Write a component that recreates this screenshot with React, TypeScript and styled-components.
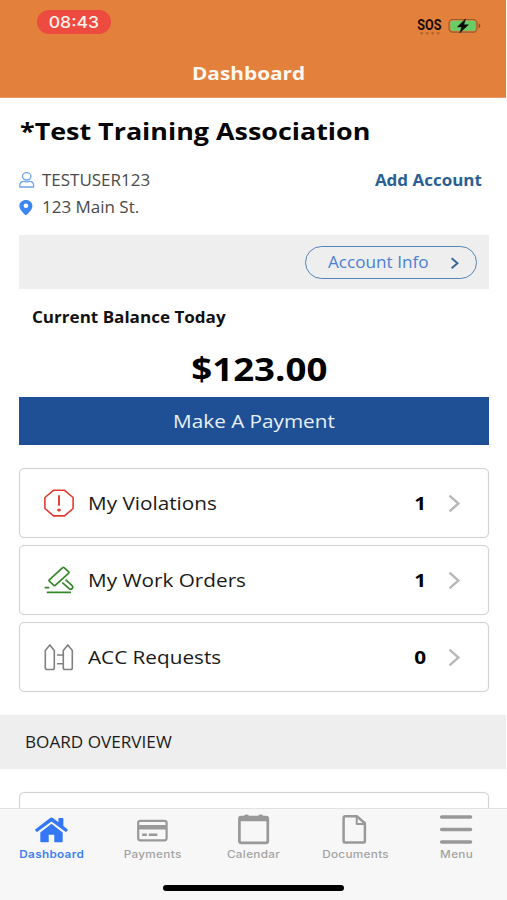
import React from "react";
import styled, { createGlobalStyle } from "styled-components";

const GlobalStyle = createGlobalStyle`
  *, *::before, *::after { box-sizing: border-box; }
  body { margin: 0; background: #fff; }
  button { padding: 0; border: 0; background: none; font: inherit; color: inherit; }
  svg { display: block; flex: none; }
`;

const SANS = '"Open Sans", "Noto Sans", sans-serif';
const SYSTEM = 'Inter, Roboto, sans-serif';

/* Wide text: glyphs are stretched horizontally from the given origin. */
const Text = styled.span<{
  $size: number;
  $weight?: number;
  $color?: string;
  $stretch?: number;
  $origin?: "left" | "center" | "right";
}>`
  display: block;
  font-family: ${SANS};
  font-size: ${(p) => p.$size}px;
  font-weight: ${(p) => p.$weight ?? 400};
  color: ${(p) => p.$color ?? "#111"};
  line-height: 1.362;
  white-space: nowrap;
  transform: scaleX(${(p) => p.$stretch ?? 1.12});
  transform-origin: ${(p) => p.$origin ?? "left"} center;
`;

const SystemText = styled(Text)<{ $spacing?: number }>`
  font-family: ${SYSTEM};
  line-height: 1.2;
  letter-spacing: ${(p) => p.$spacing ?? 0}px;
`;

const SosText = styled(Text)`
  font-family: Roboto, sans-serif;
  line-height: 14px;
`;

const Screen = styled.div`
  display: flex;
  flex-direction: column;
  width: 507px;
  height: 900px;
  overflow: hidden;
  background: #fff;
`;

const Header = styled.header`
  flex: none;
  width: 506px;
  height: 98px;
  background: #e3803c;
  border-bottom: 1px solid #e79a65;
`;

const StatusBar = styled.div`
  display: flex;
  justify-content: space-between;
  align-items: flex-start;
  height: 49px;
  padding: 10px 25px 0 37px;
`;

const TimePill = styled.div`
  display: flex;
  align-items: center;
  justify-content: center;
  width: 74px;
  height: 24px;
  padding-top: 1px;
  border-radius: 12px;
  background: #ee4b40;
`;

const StatusRight = styled.div`
  display: flex;
  align-items: flex-start;
  gap: 5px;
  padding-top: 8px;
`;

const Sos = styled.div`
  display: flex;
  flex-direction: column;
  align-items: center;
`;

const NavTitle = styled.div`
  display: flex;
  justify-content: center;
  align-items: center;
  height: 48px;
  padding-right: 8px;
`;

const Body = styled.main`
  display: flex;
  flex-direction: column;
  flex: 1;
  min-height: 0;
  overflow: hidden;
`;

const Section = styled.section`
  display: flex;
  flex-direction: column;
  flex: none;
  padding: 0 18px 0 19px;
`;

const TitleRow = styled.div`
  display: flex;
  align-items: center;
  height: 66px;
  padding-left: 0.5px;
`;

const InfoList = styled.div`
  display: flex;
  flex-direction: column;
  padding-top: 3px;
`;

const InfoRow = styled.div`
  display: flex;
  align-items: center;
  height: 27px;
`;

const IconSlot = styled.div`
  width: 23px;
  flex: none;
`;

const PushRight = styled.div`
  margin-left: auto;
  padding-right: 7px;
`;

const InfoStrip = styled.div`
  display: flex;
  align-items: center;
  justify-content: flex-end;
  height: 54px;
  width: 470px;
  margin-top: 14px;
  padding-right: 12px;
  background: #eee;
`;

const AccountButton = styled.button`
  display: flex;
  align-items: center;
  justify-content: space-between;
  width: 172px;
  height: 33px;
  padding: 2px 17px 0 22px;
  border: 1.5px solid #5586b5;
  border-radius: 17px;
`;

const BalanceLabel = styled.div`
  display: flex;
  align-items: center;
  height: 58px;
  padding-left: 12.5px;
`;

const Amount = styled.div`
  display: flex;
  align-items: center;
  justify-content: center;
  height: 45px;
  padding-left: 11px;
  width: 470px;
`;

const PayButton = styled.button`
  display: flex;
  align-items: center;
  justify-content: center;
  width: 470px;
  height: 48px;
  margin-top: 5px;
  background: #1f5096;
`;

const CardList = styled.div`
  display: flex;
  flex-direction: column;
  gap: 7px;
  width: 470px;
  margin-top: 23px;
`;

const Card = styled.div`
  display: flex;
  align-items: center;
  height: 70px;
  padding: 0 27px 0 24px;
  border: 1px solid #d4d4d4;
  border-radius: 5px;
  box-shadow: 0 0 1px #d8d8d8, inset 0 0 1px #d8d8d8;
`;

const CardLabel = styled.div`
  flex: 1;
  padding-left: 13.5px;
`;

const CardCount = styled.div`
  display: flex;
  justify-content: center;
  width: 14px;
  margin-right: 21px;
`;

const SectionHeading = styled.div`
  display: flex;
  align-items: center;
  flex: none;
  width: 506px;
  height: 54px;
  margin-top: 23px;
  padding: 2px 0 0 25px;
  background: #eee;
`;

const EmptyCard = styled(Card)`
  width: 470px;
  margin-top: 23px;
`;

const TabBar = styled.nav`
  display: flex;
  flex-direction: column;
  flex: none;
  height: 92px;
  background: #f7f7f7;
  border-top: 1px solid #e2e2e2;
`;

const Tabs = styled.div`
  display: grid;
  grid-template-columns: repeat(5, 1fr);
  height: 53px;
`;

const Tab = styled.div`
  display: flex;
  flex-direction: column;
  align-items: center;
  padding-top: 5px;
  gap: 4px;
`;

const TabLabel = styled.div`
  padding-left: 1px;
`;

const HomeIndicator = styled.div`
  width: 181px;
  height: 6px;
  margin: 23px auto 0;
  border-radius: 3px;
  background: #000;
`;

const BatteryIcon = () => (
  <svg width="33" height="18" viewBox="0 0 33 18">
    <rect x="1" y="1.5" width="28" height="12.600" rx="3.6" fill="#e3803c" stroke="#9a5b2d" strokeWidth="1.2" />
    <rect x="2.4" y="2.8" width="25.200" height="10" rx="2" fill="#69cc67" />
    <path d="M30.600 5.200c2.300 1 2.300 4.200 0 5.200z" fill="#8a5128" />
    <path d="M17.500 1 9.400 8.900h4.400L11.900 14.800l8.500-8h-4.600z" fill="#0b0b05" stroke="#0b0b05" strokeWidth=".5" />
  </svg>
);

const SosDots = () => (
  <svg width="24" height="4" viewBox="0 0 24 4" fill="#b4672f">
    {[3.7, 9.2, 14.7, 20.2].map((x) => (
      <circle key={x} cx={x} cy="1.200" r="1.400" />
    ))}
  </svg>
);

const UserIcon = () => (
  <svg width="16" height="17" viewBox="0 0 16 17" fill="none" stroke="#6fa4ee" strokeWidth="1.300">
    <ellipse cx="7.700" cy="4.300" rx="4.200" ry="3.700" />
    <path d="M.8 15v-1.400c0-2.700 1.700-4.200 4-4.200.8 0 1.400.5 2.900.5s2.100-.5 2.900-.5c2.300 0 4 1.500 4 4.200V15z" strokeLinejoin="round" />
  </svg>
);

const PinIcon = () => (
  <svg width="14" height="16" viewBox="0 0 14 16">
    <path
      d="M6.900.1C3.200.1.4 2.700.4 5.900c0 3.500 3.300 6.300 5.700 8.900.5.5 1.100.5 1.600 0 2.400-2.600 5.700-5.400 5.700-8.900C13.400 2.700 10.600.1 6.900.1zm0 3.500a2.300 2.200 0 1 1 0 4.400 2.300 2.200 0 0 1 0-4.400z"
      fill="#3d86ef"
      fillRule="evenodd"
    />
  </svg>
);

const ChevronIcon = ({ small = false }: { small?: boolean }) =>
  small ? (
    <svg width="8" height="14" viewBox="0 0 8 14" fill="none" stroke="#356596" strokeWidth="1.900">
      <path d="M.6 2.200 6.500 7.200 .6 12.200" />
    </svg>
  ) : (
    <svg width="13" height="19" viewBox="0 0 13 19" fill="none" stroke="#b8b8b8" strokeWidth="2.400">
      <path d="M1.500 1.600 10.400 9.500 1.500 17.400" />
    </svg>
  );

const ViolationIcon = () => (
  <svg width="30" height="28" viewBox="0 0 30 28" fill="none" stroke="#e23c30" strokeWidth="1.600">
    <path d="M9.500 1.300h11l8.600 7.200v11L20.500 26.900h-11L.9 19.500v-11z" />
    <path d="M15 6.200v10.600" strokeWidth="1.900" />
    <ellipse cx="15" cy="21" rx="1.900" ry="1.500" fill="#e23c30" stroke="none" />
  </svg>
);

const GavelIcon = () => (
  <svg width="30" height="28" viewBox="0 0 30 28" fill="none" stroke="#36872a" strokeWidth="1.700" strokeLinejoin="round">
    <path d="M18.700 1.600Q19.300 1 20 1.600l4.700 4.300q.6.600 0 1.200L11.200 19.300q-.7.600-1.300 0l-4.600-4.200q-.6-.6 0-1.200z" />
    <path d="m18.300 16.600 6.900 6.100c2 1.400 4.600-.8 3.100-2.800l-6.700-6.200" />
    <path d="M.7 21.600h4.600M2.800 26.400H27" />
  </svg>
);

const FenceIcon = () => (
  <svg width="30" height="28" viewBox="0 0 30 28" fill="none" stroke="#808080" strokeWidth="1.600" strokeLinejoin="round">
    <path d="M1.300 7.500 5.800 1.900 10.300 7.500v17.200q0 1.800-1.600 1.800H2.900q-1.600 0-1.600-1.800z" />
    <path d="M19.300 7.500l4.500-5.600L28.300 7.500v17.200q0 1.800-1.600 1.800h-5.800q-1.600 0-1.600-1.800z" />
    <path d="M13 12h6.300M13 20.700h6.300" />
  </svg>
);

const HomeIcon = () => (
  <svg width="34" height="31" viewBox="0 0 34 31" fill="#3478f6">
    <path d="M17.500 9.700 28.700 18.500v8.700q0 1-1 1h-7.400v-7.500h-5.600v7.500H7.300q-1 0-1-1v-8.700z" />
    <path d="M15.800 4.200q1.700-1.200 3.400 0l5.200 4V4.800q0-.7.800-.7h3.400q.8 0 .8.700v7.300l4 3.200q.6.600.1 1.200l-.9 1q-.7.700-1.500.1L17.500 7.600 3.700 17.600q-.8.600-1.500-.1l-.9-1q-.5-.6.1-1.200z" />
  </svg>
);

const PaymentIcon = () => (
  <svg width="34" height="31" viewBox="0 0 34 31">
    <rect x="3.200" y="6.800" width="28.400" height="19.500" rx="2" fill="none" stroke="#999" strokeWidth="2.200" />
    <path d="M2.700 11h29v4.500h-29zM7.200 19.500h4.600v2.500H7.200zM13.800 19.500h8.500v2.500h-8.500z" fill="#999" />
  </svg>
);

const CalendarIcon = () => (
  <svg width="34" height="31" viewBox="0 0 34 31">
    <rect x="3.400" y="3.200" width="28.400" height="25.600" rx="1.800" fill="none" stroke="#999" strokeWidth="2.700" />
    <path d="M3.400 2.200h28.400v5H3.400zM8 2.500c0-2.600 5-2.600 5 0zM22.200 2.500c0-2.600 5-2.600 5 0z" fill="#999" />
  </svg>
);

const DocumentIcon = () => (
  <svg width="34" height="31" viewBox="0 0 34 31" fill="none" stroke="#999" strokeWidth="2.500" strokeLinejoin="round">
    <path d="M7.300 2.300h11.500l8.100 6.900v17.700q0 1.700-1.800 1.700H7.300q-1.700 0-1.700-1.700V4q0-1.700 1.700-1.700z" />
    <path d="M18.700 2.600v7.400h8" strokeWidth="2" />
  </svg>
);

const MenuIcon = () => (
  <svg width="34" height="31" viewBox="0 0 34 31" stroke="#999" strokeWidth="3.600" strokeLinecap="round">
    <path d="M2.700 3h28.800M2.700 15.500h28.800M2.700 28h28.800" />
  </svg>
);

const cards = [
  { label: "My Violations", count: 1, Icon: ViolationIcon },
  { label: "My Work Orders", count: 1, Icon: GavelIcon },
  { label: "ACC Requests", count: 0, Icon: FenceIcon },
];

const tabs = [
  { label: "Dashboard", Icon: HomeIcon, active: true },
  { label: "Payments", Icon: PaymentIcon },
  { label: "Calendar", Icon: CalendarIcon },
  { label: "Documents", Icon: DocumentIcon },
  { label: "Menu", Icon: MenuIcon },
];

export default function App() {
  return (
    <>
      <GlobalStyle />
      <Screen>
        <Header>
          <StatusBar>
            <TimePill>
              <SystemText $size={16} $weight={500} $color="#fff1ea" $origin="center" $stretch={1.1}>
                08:43
              </SystemText>
            </TimePill>
            <StatusRight>
              <Sos>
                <SosText $size={14} $weight={700} $color="#160b04" $origin="center" $stretch={0.9}>
                  SOS
                </SosText>
                <SosDots />
              </Sos>
              <BatteryIcon />
            </StatusRight>
          </StatusBar>
          <NavTitle>
            <Text $size={18.6} $weight={700} $color="#fff8f0" $origin="center">
              Dashboard
            </Text>
          </NavTitle>
        </Header>

        <Body>
          <Section>
            <TitleRow>
              <Text $size={24} $weight={700} $color="#050505">
                *Test Training Association
              </Text>
            </TitleRow>
            <InfoList>
              <InfoRow>
                <IconSlot>
                  <UserIcon />
                </IconSlot>
                <Text $size={15.7} $stretch={1.082} $color="#4a4a4a">
                  TESTUSER123
                </Text>
                <PushRight>
                  <Text $size={15.7} $stretch={1.082} $weight={700} $color="#2a6093" $origin="right">
                    Add Account
                  </Text>
                </PushRight>
              </InfoRow>
              <InfoRow>
                <IconSlot>
                  <PinIcon />
                </IconSlot>
                <Text $size={15.7} $stretch={1.082} $color="#4a4a4a">
                  123 Main St.
                </Text>
              </InfoRow>
            </InfoList>
            <InfoStrip>
              <AccountButton>
                <Text $size={15.8} $stretch={1.085} $color="#4c80d2">
                  Account Info
                </Text>
                <ChevronIcon small />
              </AccountButton>
            </InfoStrip>
            <BalanceLabel>
              <Text $size={15.5} $stretch={1.1} $weight={700} $color="#111">
                Current Balance Today
              </Text>
            </BalanceLabel>
            <Amount>
              <Text $size={33} $stretch={1.11} $weight={700} $color="#000" $origin="center">
                $123.00
              </Text>
            </Amount>
            <PayButton>
              <Text $size={18.7} $stretch={1.108} $color="#e6effa" $origin="center">
                Make A Payment
              </Text>
            </PayButton>
            <CardList>
              {cards.map(({ label, count, Icon }) => (
                <Card key={label}>
                  <Icon />
                  <CardLabel>
                    <Text $size={18.5} $color="#1a1a1a">
                      {label}
                    </Text>
                  </CardLabel>
                  <CardCount>
                    <Text $size={18.5} $weight={700} $color="#000" $origin="center">
                      {count}
                    </Text>
                  </CardCount>
                  <ChevronIcon />
                </Card>
              ))}
            </CardList>
          </Section>
          <SectionHeading>
            <Text $size={15.8} $stretch={1.085} $color="#1c1c1c">
              BOARD OVERVIEW
            </Text>
          </SectionHeading>
          <Section>
            <EmptyCard />
          </Section>
        </Body>

        <TabBar>
          <Tabs>
            {tabs.map(({ label, Icon, active }) => (
              <Tab key={label}>
                <Icon />
                <TabLabel>
                  <SystemText
                    $size={10.4}
                    $weight={active ? 600 : 500}
                    $color={active ? "#3d7ff5" : "#a3a3a3"}
                    $stretch={1.13}
                    $origin="center"
                    $spacing={0.28}
                  >
                    {label}
                  </SystemText>
                </TabLabel>
              </Tab>
            ))}
          </Tabs>
          <HomeIndicator />
        </TabBar>
      </Screen>
    </>
  );
}
